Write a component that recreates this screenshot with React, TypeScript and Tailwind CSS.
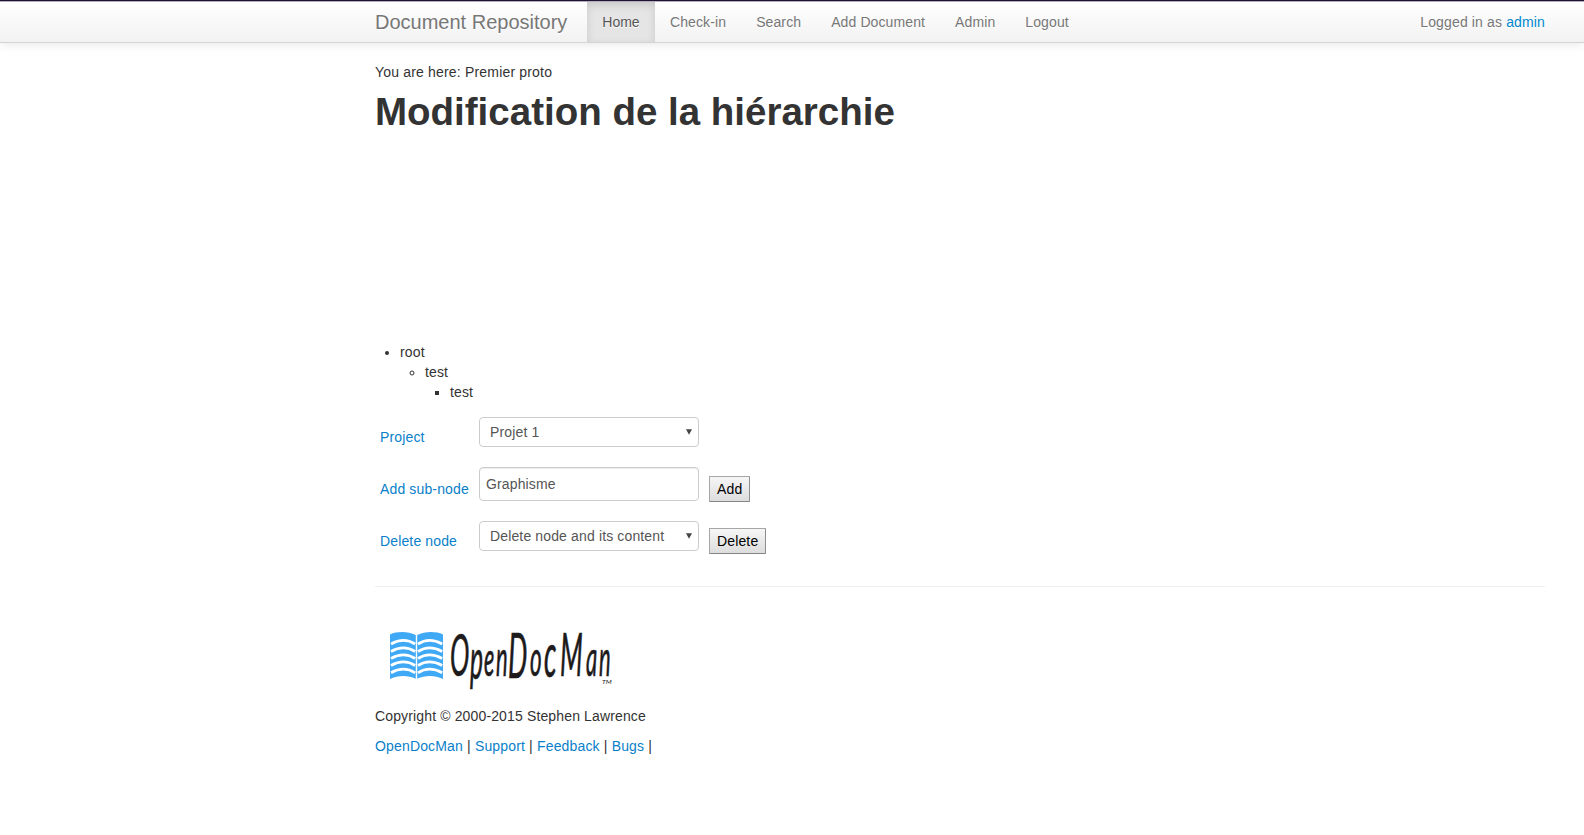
import React from "react";

const navItems = ["Check-in", "Search", "Add Document", "Admin", "Logout"];
const footerLinks = ["OpenDocMan", "Support", "Feedback", "Bugs"];

function Navbar() {
  return (
    <header className="relative flex h-[43px] border-t border-b border-t-[#1f1530] border-b-[#d4d4d4] bg-linear-to-b from-white to-[#f2f2f2] pl-[375px] shadow-[0_1px_10px_rgba(0,0,0,0.1)]">
      <div className="flex h-full w-[1170px] items-stretch border-t border-t-transparent text-[#777] [text-shadow:0_1px_0_#fff]">
        <a className="w-[212px] pt-[10px] text-[20px] leading-[20px] tracking-normal">Document Repository</a>
        <a className="w-[68px] bg-[#e5e5e5] pt-[10px] text-center tracking-normal text-[#555] shadow-[inset_0_3px_8px_rgba(0,0,0,0.125)]">
          Home
        </a>
        <nav className="flex tracking-[0.11px]">
          {navItems.map((item) => (
            <a key={item} className="px-[15px] pt-[10px]">
              {item}
            </a>
          ))}
        </nav>
        <p className="ml-auto pt-[10px]">
          Logged in as <a className="text-[#0088cc]">admin</a>
        </p>
      </div>
      <div className="absolute inset-x-0 top-0 h-px bg-[#b5adbd]" />
    </header>
  );
}

function Select({ value }: { value: string }) {
  return (
    <div className="mb-[10px] flex h-[30px] w-[220px] items-center justify-between rounded-[4px] border border-[#ccc] bg-white pr-[6px] pl-[10px] text-[#555]">
      <span>{value}</span>
      <svg width="6" height="6" viewBox="0 0 6 6" className="mb-[1px]">
        <path d="M0 0.2H6L3 5.8Z" fill="#444" />
      </svg>
    </div>
  );
}

function Button({ children }: { children: React.ReactNode }) {
  return (
    <button className="h-[26px] rounded-[1px] border border-[#a6a6a6] border-r-[#8e8e8e] border-b-[#858585] bg-linear-to-b from-[#f6f6f6] to-[#dddddd] px-[7px] leading-[20px] text-black">
      {children}
    </button>
  );
}

function Row({ label, control, action }: { label: string; control: React.ReactNode; action?: React.ReactNode }) {
  return (
    <div className="grid grid-cols-[99px_230px_auto] items-center justify-start">
      <label className="pl-[5px] whitespace-nowrap text-[#0a7fc9]">{label}</label>
      <div className="p-[5px]">{control}</div>
      <div className="pl-[5px]">{action}</div>
    </div>
  );
}

const wordmark = [
  { char: "O", x: 60, y: 46, size: 59 },
  { char: "p", x: 80, y: 49, size: 56 },
  { char: "e", x: 94, y: 46, size: 49 },
  { char: "n", x: 106, y: 46, size: 50 },
  { char: "D", x: 118, y: 48, size: 62 },
  { char: "o", x: 140, y: 46, size: 51 },
  { char: "c", x: 154, y: 47, size: 62 },
  { char: "M", x: 170, y: 46, size: 60 },
  { char: "a", x: 196, y: 46, size: 50 },
  { char: "n", x: 209, y: 46, size: 50 },
];

const SQUEEZE = 0.44;

function Logo() {
  return (
    <svg width="260" height="92" viewBox="0 -16 260 92" className="block" role="img" aria-label="OpenDocMan">
      <g fill="#3fa9f5">
        <path d="M0 4.5C7 1.2 18 1.2 25.8 5V48.8C18 45 8 45 0 49Z" />
        <path d="M27.2 5C35 1.2 46 1.2 53 4.5V49C45 45 35 45 27.2 48.8Z" />
      </g>
      <g fill="none" stroke="#fff" strokeWidth="2.7">
        {[14, 21.5, 28.5, 35.5, 42.8].map((y) => (
          <g key={y}>
            <path d={`M1 ${y}c8 -4.5 17 -4.5 24.2 0`} />
            <path d={`M28 ${y}c7 -4.5 16 -4.5 24.2 0`} />
          </g>
        ))}
      </g>
      <text
        transform={`scale(${SQUEEZE} 1)`}
        fill="#1c1a1b"
        stroke="#1c1a1b"
        strokeWidth="0.7"
        fontFamily="Lato, sans-serif"
        fontStyle="italic"
        letterSpacing="0"
      >
        {wordmark.map(({ char, x, y, size }, i) => (
          <tspan key={i} x={x / SQUEEZE} y={y} fontSize={size}>
            {char}
          </tspan>
        ))}
        <tspan x={212 / SQUEEZE} y="54" fontSize="6" textLength="22" lengthAdjust="spacingAndGlyphs" strokeWidth="0">
          TM
        </tspan>
      </text>
    </svg>
  );
}

export default function App() {
  return (
    <div className="min-h-screen bg-white font-['Liberation_Sans',Arial,sans-serif] text-[14px] leading-[20px] tracking-[0.14px] text-[#333]">
      <Navbar />
      <main className="ml-[375px] w-[1170px] pt-[19px]">
        <p className="tracking-[0.18px]">You are here: Premier proto</p>
        <h1 className="mt-[10px] text-[38.5px] leading-[40px] font-bold tracking-normal">Modification de la hiérarchie</h1>
        <ul className="mt-[210px] mb-[10px] list-disc pl-[25px]">
          <li>
            root
            <ul className="list-[circle] pl-[25px]">
              <li>
                test
                <ul className="list-[square] pl-[25px]">
                  <li>test</li>
                </ul>
              </li>
            </ul>
          </li>
        </ul>
        <form>
          <Row label="Project" control={<Select value="Projet 1" />} />
          <Row
            label="Add sub-node"
            control={
              <input
                className="mb-[10px] block h-[34px] w-[220px] rounded-[4px] border border-[#ccc] bg-white px-[6px] text-[#555] shadow-[inset_0_1px_1px_rgba(0,0,0,0.075)]"
                defaultValue="Graphisme"
              />
            }
            action={<Button>Add</Button>}
          />
          <Row
            label="Delete node"
            control={<Select value="Delete node and its content" />}
            action={<Button>Delete</Button>}
          />
        </form>
        <hr className="mt-[20px] border-[#eee]" />
        <footer>
          <div className="mt-[27px] ml-[15px]">
            <Logo />
          </div>
          <p>Copyright © 2000-2015 Stephen Lawrence</p>
          <p className="mt-[10px] tracking-[0.16px]">
            {footerLinks.map((link) => (
              <React.Fragment key={link}>
                <a className="text-[#0a7fc9]">{link}</a> |{" "}
              </React.Fragment>
            ))}
          </p>
        </footer>
      </main>
    </div>
  );
}
